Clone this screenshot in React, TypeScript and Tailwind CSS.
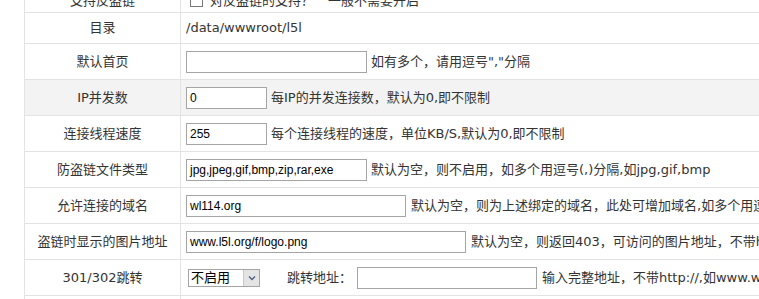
import React from 'react';

const font = { fontFamily: '"DejaVu Sans", "Noto Sans CJK SC", sans-serif' };

function Field({ w, value = '' }: { w: string; value?: string }) {
  return (
    <div
      className={`${w} h-[22px] shrink-0 border border-[#a5a5a5] bg-white pl-[3px] flex items-center text-[12px] text-black`}
      style={{ fontFamily: '"Liberation Sans", Arial, sans-serif' }}
    >
      {value}
    </div>
  );
}

function Row({
  label,
  children,
  h = 'h-[36px]',
  grey = false,
  extra = '',
}: {
  label: string;
  children?: React.ReactNode;
  h?: string;
  grey?: boolean;
  extra?: string;
}) {
  return (
    <div className={`grid grid-cols-[156px_1fr] border-b border-[#e3e3e3] ${h} ${grey ? 'bg-[#f3f3f3]' : 'bg-white'} ${extra}`}>
      <div className="border-r border-[#e3e3e3] flex items-center justify-center text-[#333]">{label}</div>
      <div className="flex items-center pl-[5px] whitespace-nowrap text-[#333]">{children}</div>
    </div>
  );
}

export default function App() {
  return (
    <div className="w-[759px] h-[299px] overflow-hidden bg-white text-[13px]" style={font}>
      <div className="ml-[24px] w-[800px] border-l border-[#e3e3e3]">
        {/* first row, scrolled mostly out of view */}
        <Row label="支持反盗链" extra="-mt-[23px] pt-[12px]">
          <span className="ml-[4px] w-[13px] h-[13px] border border-[#777] bg-white mr-[7px]" />
          <span>对反盗链的支持？</span>
          <span className="ml-[14px]">一般不需要开启</span>
        </Row>

        <Row label="目录" h="h-[31px]">
          <span>/data/wwwroot/l5l</span>
        </Row>

        <Row label="默认首页">
          <Field w="w-[181px]" />
          <span className="ml-[4px]">如有多个，请用逗号&quot;,&quot;分隔</span>
        </Row>

        <Row label="IP并发数" grey>
          <Field w="w-[81px]" value="0" />
          <span className="ml-[4px]">每IP的并发连接数，默认为0,即不限制</span>
        </Row>

        <Row label="连接线程速度">
          <Field w="w-[81px]" value="255" />
          <span className="ml-[4px]">每个连接线程的速度，单位KB/S,默认为0,即不限制</span>
        </Row>

        <Row label="防盗链文件类型">
          <Field w="w-[181px]" value="jpg,jpeg,gif,bmp,zip,rar,exe" />
          <span className="ml-[4px]">默认为空，则不启用，如多个用逗号(,)分隔,如jpg,gif,bmp</span>
        </Row>

        <Row label="允许连接的域名">
          <Field w="w-[220px]" value="wl114.org" />
          <span className="ml-[5px]">默认为空，则为上述绑定的域名，此处可增加域名,如多个用逗号(,)分隔</span>
        </Row>

        <Row label="盗链时显示的图片地址">
          <Field w="w-[280px]" value="www.l5l.org/f/logo.png" />
          <span className="ml-[5px]">默认为空，则返回403，可访问的图片地址，不带http://</span>
        </Row>

        <Row label="301/302跳转">
          <div className="ml-[2px] w-[72px] h-[18px] border border-[#a5a5a5] bg-white flex items-center text-black">
            <span className="pl-[2px] flex-1 text-[13px] leading-none">不启用</span>
            <span className="w-[16px] h-[16px] bg-[#e4e4e4] border-l border-[#c8c8c8] flex items-center justify-center">
              <svg width="8" height="6" viewBox="0 0 8 6">
                <path d="M1 1.5 L4 4.5 L7 1.5" stroke="#4d6185" strokeWidth="1.4" fill="none" />
              </svg>
            </span>
          </div>
          <span className="ml-[27px]">跳转地址：</span>
          <div className="ml-[5px]">
            <Field w="w-[180px]" />
          </div>
          <span className="ml-[5px]">输入完整地址，不带http://,如www.wdlinux.cn</span>
        </Row>

        <Row label="" />
      </div>
    </div>
  );
}
